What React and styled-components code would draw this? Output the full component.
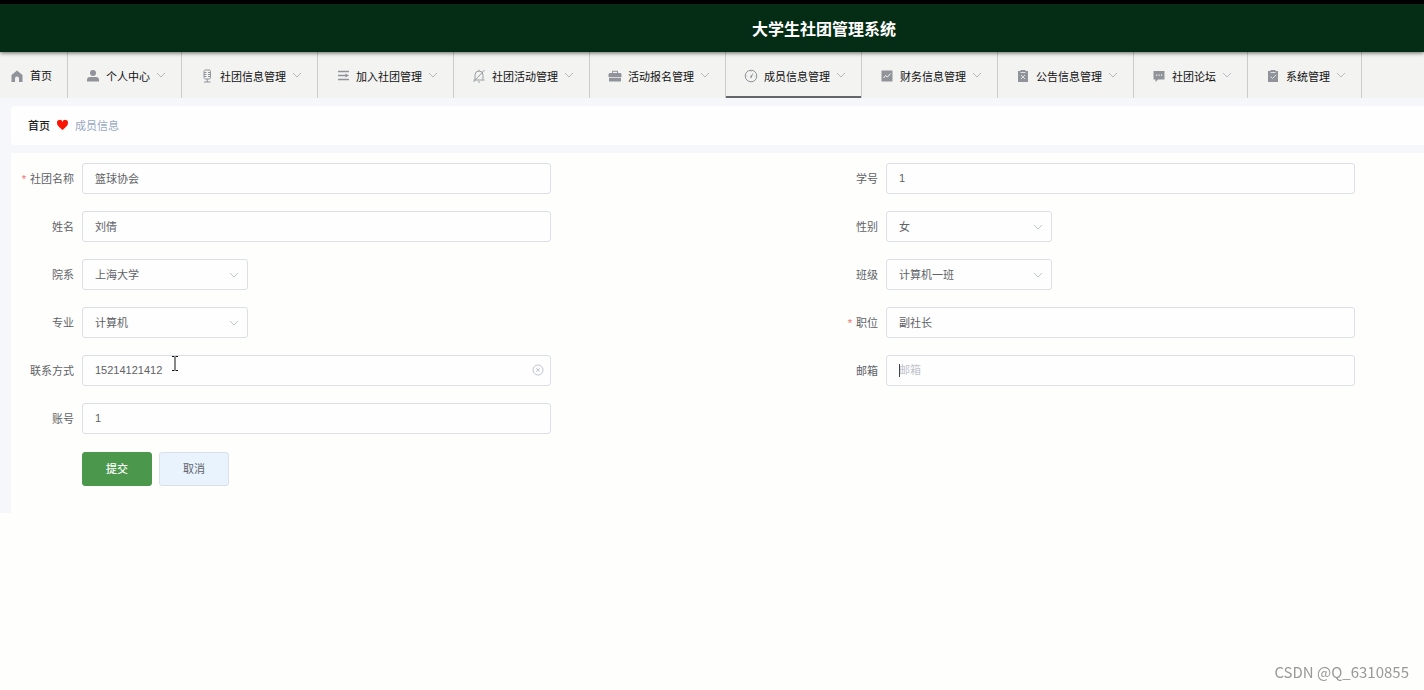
import React, { useState } from "react";
import styled, { createGlobalStyle } from "styled-components";

const header_color = "#052c15";
const icon_color = "#909399";
const line_color = "#dcdfe6";
const text_color = "#606266";

const GlobalStyle = createGlobalStyle`
  * {
    box-sizing: border-box;
  }
  body {
    margin: 0;
    background-color: #fefefd;
    color: ${text_color};
    font-family: "Liberation Sans", "Noto Sans CJK SC", sans-serif;
    font-size: 11px;
  }
  button, input, select {
    font: inherit;
  }
`;

const Header = styled.header`
  position: relative;
  display: flex;
  align-items: center;
  justify-content: center;
  height: 52px;
  padding-left: 224px;
  border-top: 4px solid #000;
  background-color: ${header_color};
  box-shadow: 0 1px 4px rgba(0, 0, 0, 0.6);
  h1 {
    margin: 0;
    padding-top: 4px;
    color: #fff;
    font-size: 16px;
    line-height: 24px;
  }
`;

const Nav = styled.nav`
  display: flex;
  background-color: #f3f3f2;
`;

const HomeLink = styled.a`
  display: flex;
  align-items: center;
  gap: 5px;
  width: 68px;
  height: 46px;
  padding-left: 11px;
  border-right: 1px solid #ccc;
  color: #111;
  text-decoration: none;
  span {
    padding-bottom: 1px;
  }
  svg {
    margin-top: 2px;
  }
`;

const NavItem = styled.button`
  display: flex;
  align-items: center;
  height: 46px;
  padding: 2px 15px 0 18px;
  border: none;
  border-right: 1px solid #ccc;
  background: none;
  box-shadow: ${(props) => (props.$active ? "inset 0 -2px #66666a" : "none")};
  color: #111;
  white-space: nowrap;
  cursor: pointer;
  span {
    margin: 0 6px;
  }
`;

const Icon = styled.svg`
  flex: none;
  width: 14px;
  height: 14px;
  fill: ${(props) => (props.$line ? "none" : icon_color)};
  stroke: ${(props) => (props.$line ? icon_color : "none")};
`;

const Arrow = styled.svg`
  flex: none;
  width: 10px;
  height: 10px;
  fill: none;
  stroke: #a8abb2;
`;

const Main = styled.main`
  padding: 8px 0 0 11px;
  background-color: #f5f7fa;
`;

const Breadcrumb = styled.div`
  display: flex;
  align-items: center;
  gap: 6px;
  height: 39px;
  margin-bottom: 8px;
  padding: 0 0 2px 17px;
  border-radius: 4px 0 0 4px;
  background-color: #fefefe;
  color: #97a8be;
  a {
    color: #222;
    font-weight: 500;
    text-decoration: none;
  }
  svg {
    width: 13px;
    height: 12px;
    fill: #f91404;
  }
`;

const Form = styled.form`
  display: grid;
  grid-template-columns: 1fr 1fr;
  column-gap: 264px;
  row-gap: 16px;
  padding: 10px 69px 27px 0;
  background-color: #fefefd;
`;

const Field = styled.div`
  display: flex;
  grid-column: ${(props) => props.$column};
`;

const Label = styled.label`
  flex: none;
  width: 71px;
  padding-right: 8px;
  line-height: 32px;
  text-align: right;
  &::before {
    content: "${(props) => (props.$required ? "*" : "")}";
    margin-right: 4px;
    color: #f56c6c;
  }
`;

const Control = styled.div`
  position: relative;
  flex: ${(props) => (props.$select ? "0 0 166px" : "1")};
`;

const Input = styled.input`
  display: block;
  width: 100%;
  height: 31px;
  padding: 0 12px 2px;
  border: 1px solid ${line_color};
  border-radius: 3px;
  outline: none;
  background-color: #fefefe;
  color: ${text_color};
  &::placeholder {
    color: #c0c4cc;
  }
`;

const Select = styled(Input)`
  padding-bottom: 0;
  appearance: none;
`;

const SelectArrow = styled(Arrow)`
  position: absolute;
  top: 11px;
  right: 9px;
  stroke: #c0c4cc;
  pointer-events: none;
`;

const ClearButton = styled.button`
  position: absolute;
  top: 9px;
  right: 7px;
  width: 12px;
  height: 12px;
  padding: 0;
  border: none;
  background: none;
  svg {
    display: block;
    width: 12px;
    height: 12px;
    stroke: #c0c4cc;
  }
`;

const Caret = styled.span`
  position: absolute;
  top: 9px;
  left: 13px;
  width: 1px;
  height: 13px;
  background-color: #444;
`;

const Pointer = styled.svg`
  position: absolute;
  top: 1px;
  left: 89px;
  width: 8px;
  height: 15px;
  fill: none;
  stroke: #111;
  pointer-events: none;
`;

const Buttons = styled.div`
  display: flex;
  gap: 7px;
  grid-column: 1 / -1;
  padding: 1px 0 0 71px;
`;

const Button = styled.button`
  width: 70px;
  height: 34px;
  padding: 0 0 2px;
  border: 1px solid ${(props) => (props.$primary ? "#4b974c" : line_color)};
  border-radius: 3px;
  background-color: ${(props) => (props.$primary ? "#4b974c" : "#e8f3fe")};
  color: ${(props) => (props.$primary ? "#fff" : text_color)};
  font-weight: ${(props) => (props.$primary ? 500 : 400)};
  cursor: pointer;
`;

const Watermark = styled.div`
  position: fixed;
  right: 15px;
  bottom: 7px;
  color: #999;
  font-family: "Noto Sans CJK SC", sans-serif;
  font-size: 15px;
  line-height: 22px;
`;

const icons = {
  user: (
    <Icon viewBox="0 0 14 14">
      <circle cx="7" cy="4" r="3" />
      <path d="M1 12.500v-1.500q0-3 3-3h6q3 0 3 3v1.500z" />
    </Icon>
  ),
  mic: (
    <Icon viewBox="0 0 14 14" $line>
      <rect x="4" y="1" width="6.500" height="9" rx="1.500" />
      <path d="M4 3.500h2.500M8 3.500h2.500M4 5.500h2.500M8 5.500h2.500M4 7.500h2.500M8 7.500h2.500M7.200 10v3M4 13h6.500" />
    </Icon>
  ),
  fold: (
    <Icon viewBox="0 0 14 14" $line>
      <path d="M2 2.500h11M2 6.500h8M2 10.500h11" strokeWidth="1.400" />
      <path d="M9.500 4.500 13 6.500 9.500 8.500z" fill={icon_color} stroke="none" />
    </Icon>
  ),
  bell: (
    <Icon viewBox="0 0 14 14" $line>
      <path d="M3 10.500V6a4 4 0 0 1 8 0v4.500M1.500 11h11M6 13h2M7 .8V2M12.500 1 1.500 13" strokeWidth=".9" />
    </Icon>
  ),
  suitcase: (
    <Icon viewBox="0 0 14 14">
      <path d="M4 4V1.800h6V4h2.500l1 1v3H.5V5l1-1zM5 4h4V2.800H5zM1 8.800h12v3.700H1z" />
    </Icon>
  ),
  meter: (
    <Icon viewBox="0 0 14 14" $line>
      <circle cx="7" cy="7" r="5.800" />
      <path d="M9.500 3.500 7.800 8.200 6.500 9.500 6.300 7.600z" fill={icon_color} stroke="none" />
      <path d="M7 2v1M2.500 7h1M10.500 7h1" strokeWidth=".6" />
    </Icon>
  ),
  chart: (
    <Icon viewBox="0 0 14 14">
      <path d="M1.500 1.500h11v11h-11z" />
      <path d="m3.500 9 2-2.500 2 1.500 3-3.500" fill="none" stroke="#f3f3f2" />
    </Icon>
  ),
  release: (
    <Icon viewBox="0 0 14 14">
      <path d="M2 2h2.500V1h5v1H12v11H2z" />
      <path d="M4.500 3.500h5M5 6l4 4M9 6l-4 4" fill="none" stroke="#f3f3f2" strokeWidth=".8" />
    </Icon>
  ),
  comment: (
    <Icon viewBox="0 0 14 14">
      <path d="M1.500 2h11v8.500H6L3.500 13v-2.500h-2z" />
      <path d="M4 5.500h1.200v1.200H4zM6.500 5.500h1.200v1.200H6.500zM9 5.500h1.200v1.200H9z" fill="#f3f3f2" />
    </Icon>
  ),
  claim: (
    <Icon viewBox="0 0 14 14">
      <path d="M2 2h2.500V1h5v1H12v11H2z" />
      <path d="M4.500 3.500h5M4.500 7.500l2 2L10 6" fill="none" stroke="#f3f3f2" strokeWidth=".8" />
    </Icon>
  ),
};

const menus = [
  { icon: "user", title: "个人中心" },
  { icon: "mic", title: "社团信息管理" },
  { icon: "fold", title: "加入社团管理" },
  { icon: "bell", title: "社团活动管理" },
  { icon: "suitcase", title: "活动报名管理" },
  { icon: "meter", title: "成员信息管理" },
  { icon: "chart", title: "财务信息管理" },
  { icon: "release", title: "公告信息管理" },
  { icon: "comment", title: "社团论坛" },
  { icon: "claim", title: "系统管理" },
];

const fields = [
  { id: "club", label: "社团名称", value: "篮球协会", required: true },
  { id: "studentNo", label: "学号", value: "1" },
  { id: "name", label: "姓名", value: "刘倩" },
  { id: "gender", label: "性别", value: "女", select: true },
  { id: "college", label: "院系", value: "上海大学", select: true },
  { id: "classes", label: "班级", value: "计算机一班", select: true },
  { id: "major", label: "专业", value: "计算机", select: true },
  { id: "position", label: "职位", value: "副社长", required: true },
  { id: "phone", label: "联系方式", value: "15214121412", clearable: true },
  { id: "email", label: "邮箱", value: "", caret: true },
  { id: "account", label: "账号", value: "1" },
];

function FormField({ field, column }) {
  const [value, setValue] = useState(field.value);
  const onChange = (e) => setValue(e.target.value);

  return (
    <Field $column={column}>
      <Label htmlFor={field.id} $required={field.required}>
        {field.label}
      </Label>
      <Control $select={field.select}>
        {field.select ? (
          <>
            <Select as="select" id={field.id} value={value} onChange={onChange}>
              <option>{field.value}</option>
            </Select>
            <SelectArrow viewBox="0 0 10 10">
              <path d="m1 3 4 4 4-4" />
            </SelectArrow>
          </>
        ) : (
          <Input
            id={field.id}
            value={value}
            placeholder={field.label}
            onChange={onChange}
          />
        )}
        {field.clearable && (
          <>
            <ClearButton
              type="button"
              aria-label="清空"
              onClick={() => setValue("")}
            >
              <svg viewBox="0 0 12 12" fill="none">
                <circle cx="6" cy="6" r="5" />
                <path d="m4.200 4.200 3.600 3.600M7.800 4.200 4.200 7.800" />
              </svg>
            </ClearButton>
            <Pointer viewBox="0 0 8 15">
              <path d="M1 .5h2.500M4.500.5H7M1 14.500h2.500M4.500 14.500H7M4 1v13" />
            </Pointer>
          </>
        )}
        {field.caret && !value && <Caret />}
      </Control>
    </Field>
  );
}

function App() {
  const [active, setActive] = useState("成员信息管理");

  return (
    <>
      <GlobalStyle />
      <Header>
        <h1>大学生社团管理系统</h1>
      </Header>
      <Nav>
        <HomeLink href="#">
          <Icon viewBox="0 0 14 14">
            <path d="M6 1.500 11.500 6v7H8V9.500a2 2 0 0 0-4 0V13H.5V6z" />
          </Icon>
          <span>首页</span>
        </HomeLink>
        {menus.map((menu) => (
          <NavItem
            key={menu.title}
            type="button"
            $active={menu.title === active}
            onClick={() => setActive(menu.title)}
          >
            {icons[menu.icon]}
            <span>{menu.title}</span>
            <Arrow viewBox="0 0 10 10">
              <path d="m1 2 4 4 4-4" strokeWidth=".8" />
            </Arrow>
          </NavItem>
        ))}
      </Nav>
      <Main>
        <Breadcrumb>
          <a href="#">首页</a>
          <svg viewBox="0 0 13 12">
            <path d="M6.500 11C3 8 1 6.500 1 4a2.800 2.800 0 0 1 5.500-1A2.800 2.800 0 0 1 12 4c0 2.500-2 4-5.500 7z" />
          </svg>
          <span>成员信息</span>
        </Breadcrumb>
        <Form onSubmit={(e) => e.preventDefault()}>
          {fields.map((field, i) => (
            <FormField key={field.id} field={field} column={(i % 2) + 1} />
          ))}
          <Buttons>
            <Button type="submit" $primary>
              提交
            </Button>
            <Button type="button">取消</Button>
          </Buttons>
        </Form>
      </Main>
      <Watermark>CSDN @Q_6310855</Watermark>
    </>
  );
}

export default App;
